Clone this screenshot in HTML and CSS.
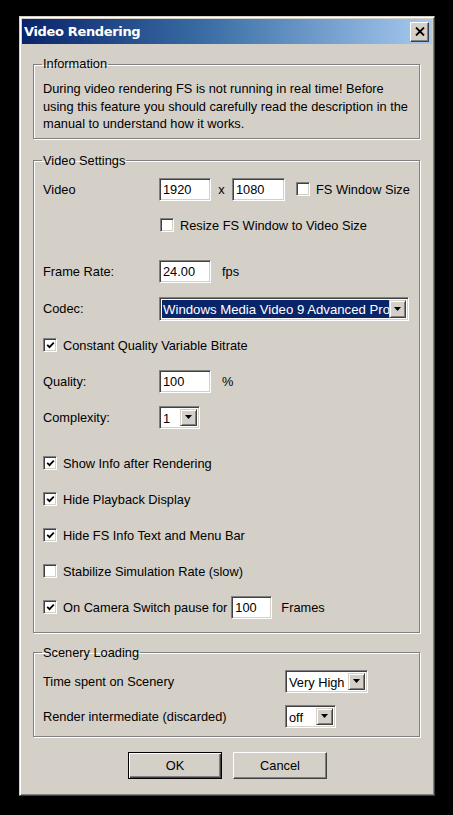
FILE: index.html
```html
<!DOCTYPE html>
<html>
<head>
<meta charset="utf-8">
<title>Video Rendering</title>
<link rel="stylesheet" href="styles.css">
</head>
<body>
<div class="window">
  <div class="titlebar">
    <span class="title">Video Rendering</span>
    <span class="close"><svg width="10" height="9" viewBox="0 0 10 9"><path d="M1 0.5 L9 8.5 M9 0.5 L1 8.5" stroke="#000" stroke-width="1.8"/></svg></span>
  </div>
  <div class="content">
    <fieldset class="group info">
      <legend>Information</legend>
      <p class="infotext">During video rendering FS is not running in real time! Before using this feature you should carefully read the description in the manual to understand how it works.</p>
    </fieldset>

    <fieldset class="group settings">
      <legend>Video Settings</legend>
      <div class="row">
        <span class="label">Video</span>
        <span class="edit w52">1920</span>
        <span class="times">x</span>
        <span class="edit w53">1080</span>
        <span class="cb gap12"></span>
        <span class="cbtext">FS Window Size</span>
      </div>
      <div class="row">
        <span class="cb indent"></span>
        <span class="cbtext">Resize FS Window to Video Size</span>
      </div>
      <div class="row spaced">
        <span class="label">Frame Rate:</span>
        <span class="edit w52">24.00</span>
        <span class="unit">fps</span>
      </div>
      <div class="row codecrow">
        <span class="label">Codec:</span>
        <span class="combo codec"><span class="value selected">Windows Media Video 9 Advanced Profi</span><span class="arrow"><svg width="7" height="4" viewBox="0 0 7 4"><path d="M0 0H7L3.5 4Z" fill="#000"/></svg></span></span>
      </div>
      <div class="row">
        <span class="cb checked"><svg width="9" height="9" viewBox="0 0 9 9"><path d="M1.2 3.8 L3.5 6.2 L7.8 1.6" fill="none" stroke="#000" stroke-width="1.8"/></svg></span>
        <span class="cbtext">Constant Quality Variable Bitrate</span>
      </div>
      <div class="row">
        <span class="label">Quality:</span>
        <span class="edit w52">100</span>
        <span class="unit">%</span>
      </div>
      <div class="row">
        <span class="label">Complexity:</span>
        <span class="combo small"><span class="value">1</span><span class="arrow"><svg width="7" height="4" viewBox="0 0 7 4"><path d="M0 0H7L3.5 4Z" fill="#000"/></svg></span></span>
      </div>
      <div class="row spaced">
        <span class="cb checked"><svg width="9" height="9" viewBox="0 0 9 9"><path d="M1.2 3.8 L3.5 6.2 L7.8 1.6" fill="none" stroke="#000" stroke-width="1.8"/></svg></span>
        <span class="cbtext">Show Info after Rendering</span>
      </div>
      <div class="row">
        <span class="cb checked"><svg width="9" height="9" viewBox="0 0 9 9"><path d="M1.2 3.8 L3.5 6.2 L7.8 1.6" fill="none" stroke="#000" stroke-width="1.8"/></svg></span>
        <span class="cbtext">Hide Playback Display</span>
      </div>
      <div class="row">
        <span class="cb checked"><svg width="9" height="9" viewBox="0 0 9 9"><path d="M1.2 3.8 L3.5 6.2 L7.8 1.6" fill="none" stroke="#000" stroke-width="1.8"/></svg></span>
        <span class="cbtext">Hide FS Info Text and Menu Bar</span>
      </div>
      <div class="row">
        <span class="cb"></span>
        <span class="cbtext">Stabilize Simulation Rate (slow)</span>
      </div>
      <div class="row">
        <span class="cb checked"><svg width="9" height="9" viewBox="0 0 9 9"><path d="M1.2 3.8 L3.5 6.2 L7.8 1.6" fill="none" stroke="#000" stroke-width="1.8"/></svg></span>
        <span class="cbtext camtext">On Camera Switch pause for</span>
        <span class="edit w41">100</span>
        <span class="unit frames">Frames</span>
      </div>
    </fieldset>

    <fieldset class="group scenery">
      <legend>Scenery Loading</legend>
      <div class="row">
        <span class="label wide">Time spent on Scenery</span>
        <span class="combo vhigh"><span class="value">Very High</span><span class="arrow"><svg width="7" height="4" viewBox="0 0 7 4"><path d="M0 0H7L3.5 4Z" fill="#000"/></svg></span></span>
      </div>
      <div class="row">
        <span class="label wide">Render intermediate (discarded)</span>
        <span class="combo off"><span class="value">off</span><span class="arrow"><svg width="7" height="4" viewBox="0 0 7 4"><path d="M0 0H7L3.5 4Z" fill="#000"/></svg></span></span>
      </div>
    </fieldset>

    <div class="buttons">
      <span class="btn default">OK</span>
      <span class="btn">Cancel</span>
    </div>
  </div>
</div>
</body>
</html>
```
FILE: styles.css
```css
html, body {
  margin: 0;
  padding: 0;
  background: #000;
}
body {
  font-family: "Liberation Sans", Arial, sans-serif;
  font-size: 12.8px;
  color: #000;
}
.window {
  margin: 16px 0 0 19px;
  width: 416px;
  height: 780px;
  box-sizing: border-box;
  background: #d4d0c8;
  border: 1px solid;
  border-color: #d4d0c8 #404040 #404040 #d4d0c8;
  box-shadow: inset 1px 1px 0 #fff, inset -1px -1px 0 #808080;
  padding: 2px;
}
.titlebar {
  height: 25px;
  background: linear-gradient(to right, #0a246a 0%, #3a6ea5 45%, #a6caf0 100%);
  display: flex;
  align-items: center;
  justify-content: space-between;
  padding: 0 3px 0 2px;
}
.title {
  color: #fff;
  font-family: "DejaVu Sans", sans-serif;
  font-weight: bold;
  font-size: 13px;
  letter-spacing: -0.35px;
}
.close {
  width: 19px;
  height: 20px;
  box-sizing: border-box;
  background: #d4d0c8;
  border: 1px solid;
  border-color: #fff #404040 #404040 #fff;
  box-shadow: inset -1px -1px 0 #808080;
  display: flex;
  align-items: center;
  justify-content: center;
}
.content {
  padding: 12px 12px 0 11px;
}
.group {
  margin: 0;
  padding: 0 9px;
  border: 1px solid #808080;
  box-shadow: inset 1px 1px 0 #fff, 1px 1px 0 #fff;
}
.group legend {
  padding: 0 1px;
  margin-left: -1px;
  line-height: 16px;
}
.info {
  padding-top: 8px;
  padding-bottom: 5px;
}
.infotext {
  margin: 0;
  line-height: 17.5px;
}
.settings {
  margin-top: 14px;
  padding-top: 9px;
  padding-bottom: 13px;
  display: flex;
  flex-direction: column;
  gap: 13px;
}
.scenery {
  margin-top: 12px;
  padding-top: 9px;
  padding-bottom: 8px;
  display: flex;
  flex-direction: column;
  gap: 12px;
}
.row {
  display: flex;
  align-items: center;
  height: 23px;
  white-space: nowrap;
}
.row.spaced {
  margin-top: 10px;
}
.row.codecrow {
  height: 24px;
  margin-top: 1px;
}
.label {
  width: 116px;
  flex: none;
}
.label.wide {
  width: 242px;
}
.edit {
  height: 23px;
  box-sizing: border-box;
  background: #fff;
  border: 1px solid;
  border-color: #808080 #fff #fff #808080;
  box-shadow: inset 1px 1px 0 #404040, inset -1px -1px 0 #d4d0c8;
  padding: 2px 0 0 3px;
  line-height: 17px;
  flex: none;
}
.w52 { width: 52px; }
.w53 { width: 53px; }
.w41 { width: 41px; }
.times {
  width: 21px;
  text-align: center;
  flex: none;
}
.unit {
  margin-left: 11px;
  flex: none;
}
.unit.frames {
  margin-left: 9px;
}
.cb {
  width: 14px;
  height: 14px;
  box-sizing: border-box;
  background: #fff;
  border: 1px solid;
  border-color: #808080 #fff #fff #808080;
  box-shadow: inset 1px 1px 0 #404040, inset -1px -1px 0 #d4d0c8;
  flex: none;
  display: flex;
  align-items: center;
  justify-content: center;
}
.cb.gap12 { margin-left: 11px; }
.cb.indent { margin-left: 117px; }
.cbtext {
  margin-left: 6px;
  flex: none;
  white-space: nowrap;
}
.camtext {
  margin-right: 4px;
}
.combo {
  height: 23px;
  box-sizing: border-box;
  background: #fff;
  border: 1px solid;
  border-color: #808080 #fff #fff #808080;
  box-shadow: inset 1px 1px 0 #404040, inset -1px -1px 0 #d4d0c8;
  padding: 2px;
  display: flex;
  align-items: stretch;
  flex: none;
}
.combo .value {
  flex: 1;
  overflow: hidden;
  white-space: nowrap;
  line-height: 19px;
  padding-left: 1px;
}
.combo .value.selected {
  background: #0a246a;
  color: #fff;
}
.combo .arrow {
  width: 17px;
  box-sizing: border-box;
  background: #d4d0c8;
  border: 1px solid;
  border-color: #d4d0c8 #404040 #404040 #d4d0c8;
  box-shadow: inset 1px 1px 0 #fff, inset -1px -1px 0 #808080;
  display: flex;
  align-items: center;
  justify-content: center;
  flex: none;
}
.codec {
  width: 250px;
  height: 24px;
  font-size: 13.2px;
}
.small { width: 41px; }
.vhigh { width: 83px; }
.off { width: 51px; }
.buttons {
  display: flex;
  justify-content: center;
  gap: 11px;
  margin-top: 15px;
  padding-left: 2px;
}
.btn {
  width: 94px;
  height: 27px;
  box-sizing: border-box;
  border: 1px solid;
  border-color: #fff #404040 #404040 #fff;
  box-shadow: inset -1px -1px 0 #808080;
  display: flex;
  align-items: center;
  justify-content: center;
  background: #d4d0c8;
}
.btn.default {
  border: 1px solid #000;
  box-shadow: inset 1px 1px 0 #fff, inset -1px -1px 0 #404040, inset -2px -2px 0 #808080;
}
```
